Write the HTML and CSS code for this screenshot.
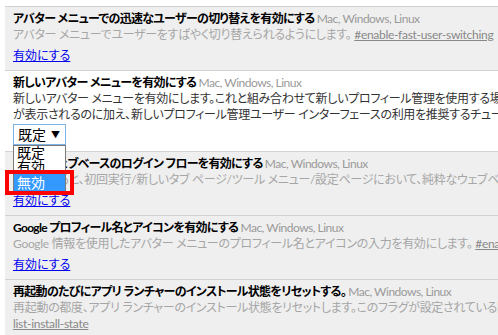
FILE: index.html
```html
<!DOCTYPE html>
<html lang="ja">
<head>
    <meta charset="UTF-8">
    <title>試験運用機能</title>
    <link rel="stylesheet" href="styles.css">
</head>
<body>
    <div class="experiments">
        <div class="experiment disabled">
            <div class="name">アバター メニューでの迅速なユーザーの切り替えを有効にする <span class="platforms">Mac, Windows, Linux</span></div>
            <div class="desc">アバター メニューでユーザーをすばやく切り替えられるようにします。 <a class="permalink" href="#">#enable-fast-user-switching</a></div>
            <a class="toggle" href="#">有効にする</a>
        </div>

        <div class="experiment">
            <div class="name">新しいアバター メニューを有効にする <span class="platforms">Mac, Windows, Linux</span></div>
            <div class="desc">新しいアバター メニューを有効にします。これと組み合わせて新しいプロフィール管理を使用する場合は、新しいアバター メニュー<br>が表示されるのに加え、新しいプロフィール管理ユーザー インターフェースの利用を推奨するチュートリアルも表示されます。</div>
            <div class="select-wrap">
                <div class="select"><span>既定</span><span class="arrow">▼</span></div>
                <ul class="dropdown">
                    <li>既定</li>
                    <li>有効</li>
                    <li class="selected">無効</li>
                </ul>
                <div class="highlight"></div>
            </div>
        </div>

        <div class="experiment disabled">
            <div class="name">純粋なウェブベースのログイン フローを有効にする <span class="platforms">Mac, Windows, Linux</span></div>
            <div class="desc">有効にすると、初回実行/新しいタブ ページ/ツール メニュー/設定ページにおいて、純粋なウェブベースのログイン フローを使用します。</div>
            <a class="toggle" href="#">有効にする</a>
        </div>

        <div class="experiment disabled">
            <div class="name">Google プロフィール名とアイコンを有効にする <span class="platforms">Mac, Windows, Linux</span></div>
            <div class="desc">Google 情報を使用したアバター メニューのプロフィール名とアイコンの入力を有効にします。 <a class="permalink" href="#">#enable-google-profile-info</a></div>
            <a class="toggle" href="#">有効にする</a>
        </div>

        <div class="experiment disabled">
            <div class="name">再起動のたびにアプリ ランチャーのインストール状態をリセットする。 <span class="platforms">Mac, Windows, Linux</span></div>
            <div class="desc">再起動の都度、アプリ ランチャーのインストール状態をリセットします。このフラグが設定されている間は、起動のたびにアプリ ランチャーを表示します。 <a class="permalink" href="#">#reset-app-<br>list-install-state</a></div>
            <a class="toggle" href="#">有効にする</a>
        </div>
    </div>
</body>
</html>
```

FILE: styles.css
```css
body {
    margin: 0;
    overflow: hidden;
    background-color: #fff;
    font-family: Lato, "Noto Sans CJK JP", sans-serif;
    font-feature-settings: "palt";
    font-size: 12px;
    color: #333;
}

.experiments {
    margin: 6px 0 0 5px;
    width: 900px;
}

.experiment {
    border-top: 1px solid #d2d2d2;
    padding: 4px 8px 6px;
    line-height: 16px;
}

.experiment.disabled {
    background-color: #efefef;
    color: #a6a6a6;
}

.name {
    font-weight: bold;
    color: #000;
    white-space: nowrap;
    letter-spacing: -0.7px;
}

.platforms {
    font-weight: normal;
    color: #9a9a9a;
    letter-spacing: -0.5px;
}

.desc {
    white-space: nowrap;
    letter-spacing: -0.3px;
}

.permalink {
    color: #888;
}

.toggle {
    display: inline-block;
    margin-top: 5px;
    color: #00e;
}

.select-wrap {
    position: relative;
    margin-top: 1px;
    width: 53px;
    height: 21px;
}

.select {
    box-sizing: border-box;
    width: 53px;
    height: 21px;
    border: 1px solid #7eb4ea;
    padding: 0 5px 0 4px;
    font-size: 14px;
    line-height: 19px;
    color: #000;
    display: flex;
    justify-content: space-between;
    align-items: center;
}

.arrow {
    font-size: 9px;
}

.dropdown {
    position: absolute;
    top: 21px;
    left: 0;
    box-sizing: border-box;
    width: 53px;
    margin: 0;
    padding: 0;
    list-style: none;
    background-color: #fff;
    border: 1px solid #7a7a7a;
    font-size: 14px;
    color: #000;
    z-index: 1;
}

.dropdown li {
    padding: 0 3px;
    height: 14px;
    line-height: 14px;
}

.dropdown li.selected {
    height: 18px;
    line-height: 18px;
    background-color: #3399ff;
    color: #fff;
}

.highlight {
    position: absolute;
    left: -8px;
    top: 46px;
    width: 69px;
    height: 25px;
    box-sizing: border-box;
    border: 4px solid #f00;
    z-index: 2;
}
```
